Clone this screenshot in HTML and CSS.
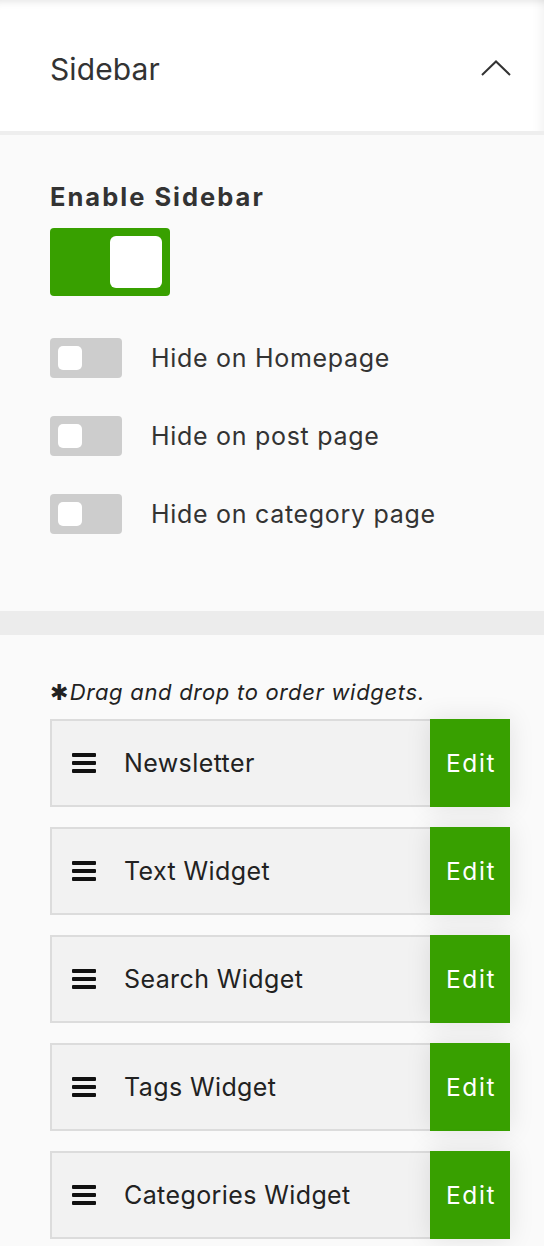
FILE: index.html
```html
<!DOCTYPE html>
<html lang="en">
<head>
  <meta charset="UTF-8" />
  <meta name="viewport" content="width=device-width, initial-scale=1.0" />
  <title>Sidebar Settings</title>
  <link rel="stylesheet" href="styles.css">
</head>
<body>
  <div class="panel">
    <div class="panel-head">
      <span class="panel-title">Sidebar</span>
      <svg class="chevron" width="30" height="16" viewBox="0 0 30 16">
        <polyline points="1,15 15,1.5 29,15" fill="none" stroke="#333" stroke-width="2" />
      </svg>
    </div>

    <div class="section options">
      <h2 class="opt-title">Enable Sidebar</h2>
      <div class="switch big on"><span class="knob"></span></div>

      <div class="opt-row">
        <div class="switch"><span class="knob"></span></div>
        <span class="opt-label">Hide on Homepage</span>
      </div>
      <div class="opt-row">
        <div class="switch"><span class="knob"></span></div>
        <span class="opt-label">Hide on post page</span>
      </div>
      <div class="opt-row">
        <div class="switch"><span class="knob"></span></div>
        <span class="opt-label">Hide on category page</span>
      </div>
    </div>

    <div class="divider"></div>

    <div class="section widgets">
      <p class="note"><span class="star">&#10033;</span>Drag and drop to order widgets.</p>

      <ul class="widget-list">
        <li class="widget">
          <span class="handle"></span>
          <span class="widget-name">Newsletter</span>
          <button class="edit">Edit</button>
        </li>
        <li class="widget">
          <span class="handle"></span>
          <span class="widget-name">Text Widget</span>
          <button class="edit">Edit</button>
        </li>
        <li class="widget">
          <span class="handle"></span>
          <span class="widget-name">Search Widget</span>
          <button class="edit">Edit</button>
        </li>
        <li class="widget">
          <span class="handle"></span>
          <span class="widget-name">Tags Widget</span>
          <button class="edit">Edit</button>
        </li>
        <li class="widget">
          <span class="handle"></span>
          <span class="widget-name">Categories Widget</span>
          <button class="edit">Edit</button>
        </li>
      </ul>
    </div>
  </div>
</body>
</html>
```

FILE: styles.css
```css
body { margin: 0; background: #fafafa; font-family: Inter, "Noto Sans", sans-serif; color: #333; }

.panel { width: 544px; overflow: hidden; }

.panel-head { box-sizing: border-box; display: flex; align-items: center; justify-content: space-between; padding: 6px 33px 0 50px; background: #fff; border-bottom: 4px solid #eee; height: 135px; box-shadow: inset 0 9px 8px -8px rgba(0,0,0,0.12), inset -14px 0 14px -14px rgba(0,0,0,0.08); }
.panel-title { font-size: 30px; font-weight: 400; color: #333; letter-spacing: 0.1px; }
.chevron { display: block; margin-top: -2px; }

.section { padding-left: 50px; padding-right: 34px; }
.options { padding-top: 47px; padding-bottom: 77px; }
.opt-title { margin: 0 0 17px; font-size: 25.5px; font-weight: 700; line-height: 29px; letter-spacing: 2px; color: #333; }

.switch { width: 72px; height: 40px; box-sizing: border-box; padding: 8px; border-radius: 4px; background: #cdcdcd; display: flex; flex-shrink: 0; }
.switch .knob { width: 24px; height: 24px; border-radius: 5px; background: #fff; }
.switch.big { width: 120px; height: 68px; margin-bottom: 42px; justify-content: flex-end; }
.switch.big .knob { width: 52px; height: 52px; border-radius: 6px; }
.switch.on { background: #38a000; }

.opt-row { display: flex; align-items: center; gap: 29px; margin-bottom: 38px; }
.opt-row:last-child { margin-bottom: 0; }
.opt-label { font-size: 25px; letter-spacing: 0.7px; color: #333; }

.divider { height: 24px; background: #ececec; }

.widgets { padding-top: 44px; }
.note { margin: 0 0 13px; font-size: 22px; line-height: 27px; font-style: italic; letter-spacing: 0.7px; color: #222; }
.star { font-style: normal; font-size: 22px; margin-right: 1px; }

.widget-list { list-style: none; margin: 0; padding: 0; }
.widget { display: flex; align-items: center; height: 88px; box-sizing: border-box; margin-bottom: 20px; border: 2px solid #dcdcdc; border-right: 0; background: #f2f2f2; }
.handle { width: 24px; height: 4px; margin: 0 28px 0 20px; background: #111; border-radius: 1px; box-shadow: 0 -8px 0 #111, 0 8px 0 #111; }
.widget-name { flex: 1; font-size: 25px; letter-spacing: 0.4px; color: #222; }
.edit { align-self: stretch; width: 80px; margin: -2px 0; border: 0; background: #38a000; color: #fff; font-family: inherit; font-size: 24.5px; letter-spacing: 1.6px; padding: 0 0 0 2px; box-shadow: 0 0 24px rgba(0,0,0,0.1); }
```
